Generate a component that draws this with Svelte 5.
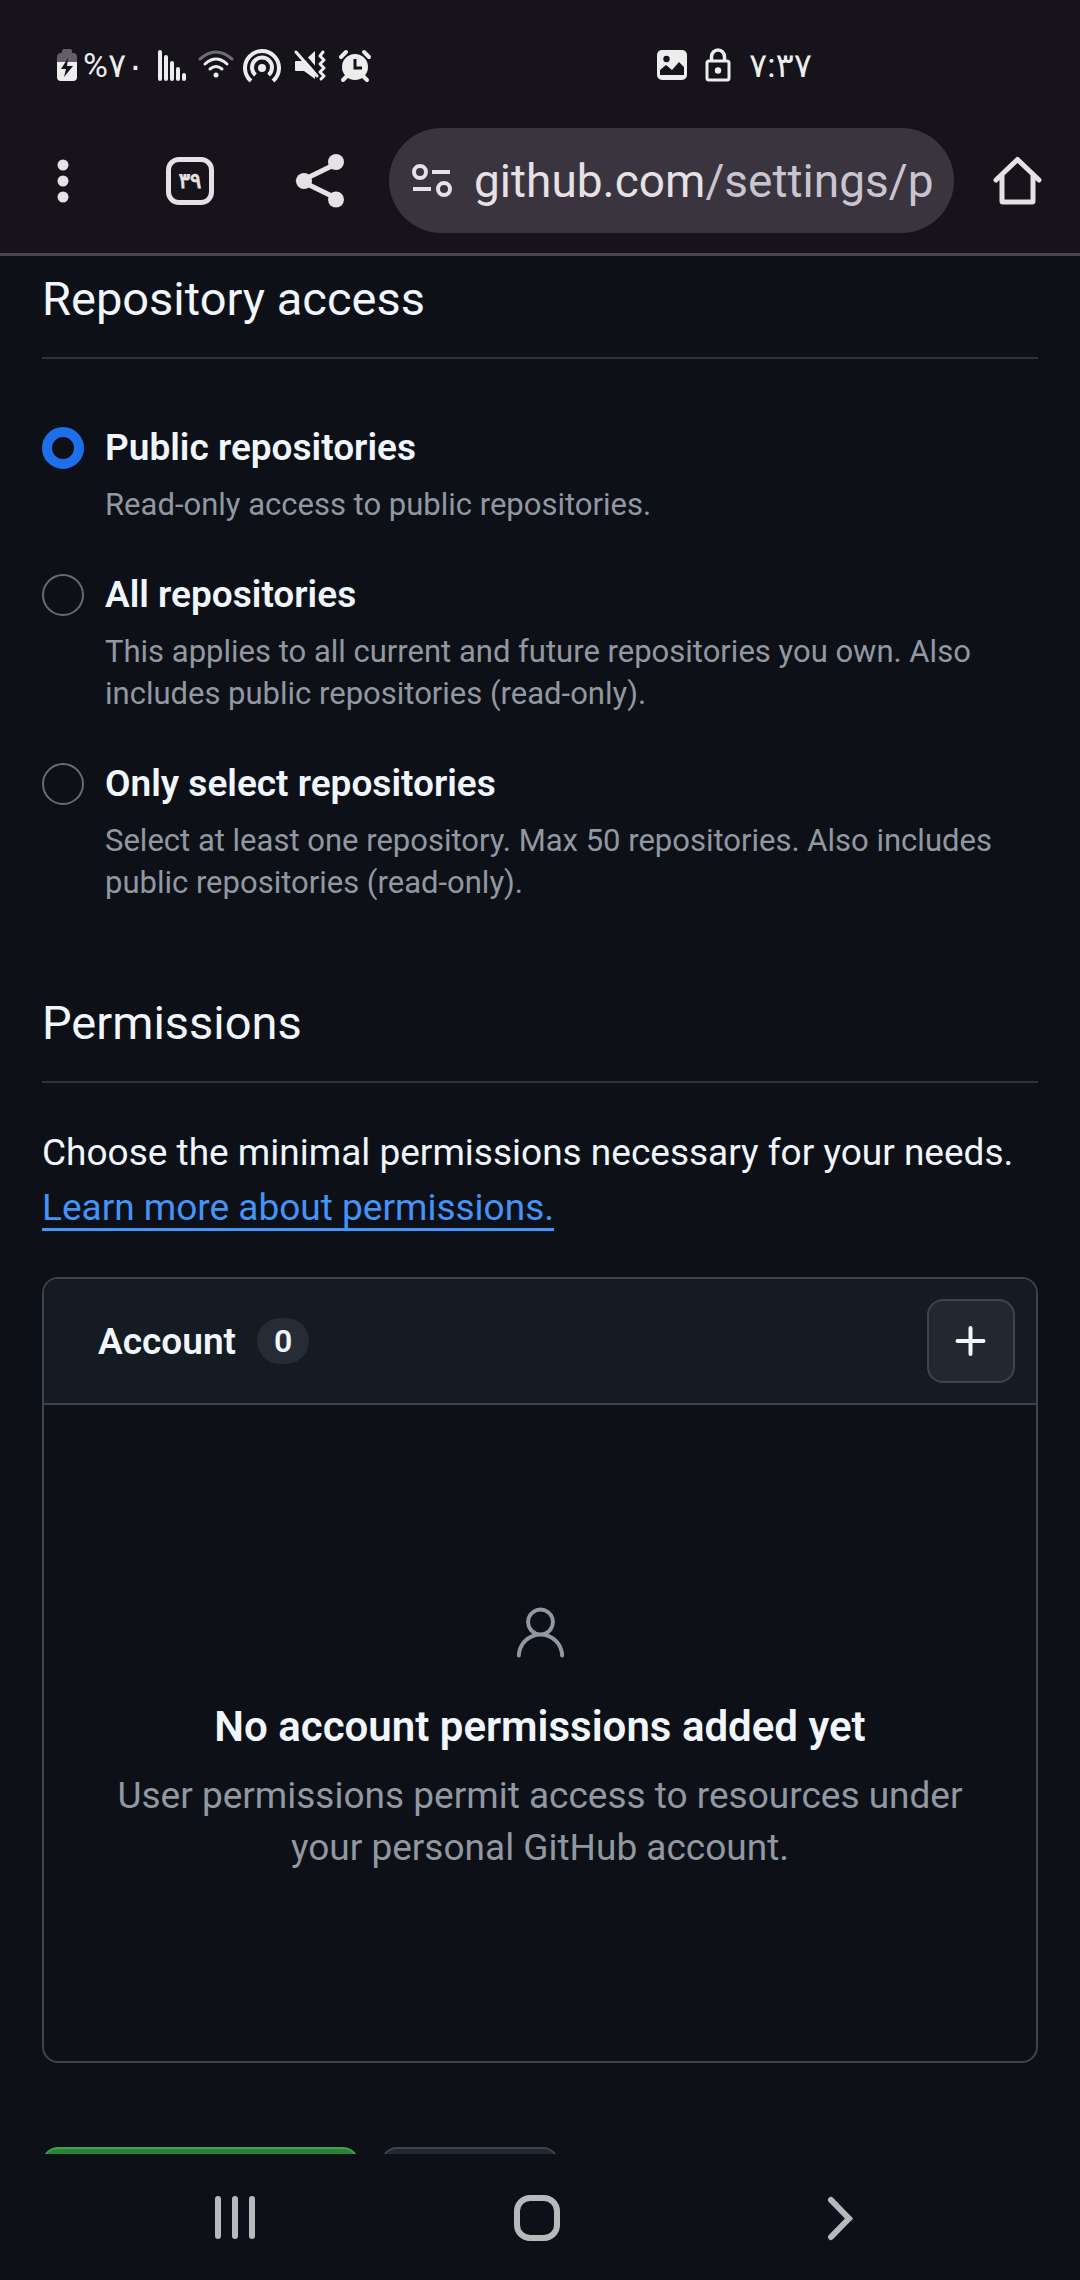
<script>
  let selected = $state('public');

  const options = [
    { id: 'public', label: 'Public repositories', hint: 'Read-only access to public repositories.' },
    {
      id: 'all',
      label: 'All repositories',
      hint: 'This applies to all current and future repositories you own. Also includes public repositories (read-only).'
    },
    {
      id: 'select',
      label: 'Only select repositories',
      hint: 'Select at least one repository. Max 50 repositories. Also includes public repositories (read-only).'
    }
  ];
</script>

<div class="screen">
  <header class="chrome">
    <div class="status">
      <div class="status-left">
        <svg class="battery" viewBox="0 0 22 34" aria-hidden="true">
          <path d="M6 5V3q0-2 2-2h6q2 0 2 2v2h1q4 0 4 4v6H1V9q0-4 4-4z" fill="#625f66" />
          <path d="M1 14h20v15q0 4-4 4H5q-4 0-4-4z" fill="#ededee" />
          <path d="M12 10 5 21h5l-2 8 9-11h-6z" fill="#16131a" />
        </svg>
        <span class="status-text percent">%۷۰</span>
        <svg class="cell" viewBox="0 0 46 36" aria-hidden="true">
          <g stroke="#ededee" stroke-width="4" stroke-linecap="round">
            <path d="M11 5v27M17 10v22M23 16v16M29 22v10M35 28v4" />
          </g>
        </svg>
        <svg class="cell" viewBox="0 0 46 36" aria-hidden="true">
          <g fill="none" stroke-width="3" stroke-linecap="round">
            <path d="M5 12q16-14 32 0" stroke="#6f6c73" />
            <path d="M10 17q11-10 22 0M15 22q6-5 12 0" stroke="#ededee" />
          </g>
          <circle cx="21" cy="28" r="2.5" fill="#ededee" />
        </svg>
        <svg class="cell" viewBox="0 0 46 36" aria-hidden="true">
          <g fill="none" stroke="#ededee" stroke-width="4">
            <path d="M10 34A17 17 0 1 1 32 34" />
            <path d="M14.5 28A10 10 0 1 1 27.500 28" />
          </g>
          <circle cx="21" cy="21" r="4" fill="#ededee" />
        </svg>
        <svg class="cell" viewBox="0 0 46 36" aria-hidden="true">
          <path d="M9 14h8l11-10v28L17 24H9q-1 0-1-1v-8q0-1 1-1z" fill="#ededee" />
          <path d="m11 2 20 23" stroke="#16131a" stroke-width="4" />
          <path d="m9 5 21 24" stroke="#ededee" stroke-width="3" stroke-linecap="round" />
          <path d="m36 5-3 4 4 4-4 4 4 4-4 4 4 4-3 3" fill="none" stroke="#ededee" stroke-width="3" stroke-linecap="round" stroke-linejoin="round" />
        </svg>
        <svg class="cell" viewBox="0 0 46 36" aria-hidden="true">
          <circle cx="22" cy="20" r="13" fill="#ededee" />
          <path d="m8 10 5-5M36 10l-5-5M14 29l-4 4M30 29l4 4" stroke="#ededee" stroke-width="4" stroke-linecap="round" />
          <path d="M22 12v9h7" fill="none" stroke="#16131a" stroke-width="3" />
        </svg>
      </div>
      <div class="status-right">
        <svg class="picture" viewBox="0 0 30 30" aria-hidden="true">
          <rect width="30" height="30" rx="5" fill="#ededee" />
          <circle cx="9.500" cy="9" r="3.200" fill="#16131a" />
          <path d="M3 25v-5l6-5 6 5 7-8 5 5v8z" fill="#16131a" />
        </svg>
        <svg class="lock" viewBox="0 0 26 34" aria-hidden="true">
          <rect x="2" y="13" width="22" height="19" rx="2" fill="none" stroke="#ededee" stroke-width="3" />
          <path d="M6.500 12V9a6.500 7 0 0 1 13 0v3" fill="none" stroke="#ededee" stroke-width="3.500" />
          <circle cx="13" cy="22.500" r="3.200" fill="#ededee" />
        </svg>
        <span class="status-text">۷:۳۷</span>
      </div>
    </div>

    <div class="toolbar">
      <button class="tool" aria-label="Menu">
        <svg viewBox="0 0 56 56">
          <g fill="#e6e1e5"><circle cx="27" cy="12" r="5.500" /><circle cx="27" cy="28" r="5.500" /><circle cx="27" cy="44" r="5.500" /></g>
        </svg>
      </button>
      <button class="tool tab-tool" aria-label="Tabs"><span class="tabs">۳۹</span></button>
      <button class="tool" aria-label="Share">
        <svg viewBox="0 0 56 56">
          <path d="M48 9 9 28l39 19" fill="none" stroke="#e6e1e5" stroke-width="5" />
          <g fill="#e6e1e5"><circle cx="12" cy="28" r="8" /><circle cx="44" cy="9" r="8" /><circle cx="44" cy="46.500" r="8" /></g>
        </svg>
      </button>
      <button class="address">
        <svg viewBox="0 0 40 34" aria-hidden="true">
          <g fill="none" stroke="#e6e1e5" stroke-width="4">
            <circle cx="8" cy="8" r="6" /><path d="M20 8h18M1 25h18" /><circle cx="32" cy="25" r="6" />
          </g>
        </svg>
        <span class="url"><span class="host">github.com</span>/settings/p</span>
      </button>
      <button class="home" aria-label="Home">
        <svg viewBox="0 0 56 56">
          <path d="M7 27 28.500 6.500 50 27M13 23v25q0 1 1 1h29q1 0 1-1V23" fill="none" stroke="#e6e1e5" stroke-width="5" stroke-linecap="round" stroke-linejoin="round" />
        </svg>
      </button>
    </div>
  </header>

  <main>
    <h2 id="access">Repository access</h2>
    <div class="options" role="radiogroup" aria-labelledby="access">
      {#each options as option (option.id)}
        <div class="option">
          <input type="radio" id={option.id} name="access" value={option.id} bind:group={selected} aria-describedby="{option.id}-hint" />
          <div>
            <label for={option.id}>{option.label}</label>
            <p class="hint" id="{option.id}-hint">{option.hint}</p>
          </div>
        </div>
      {/each}
    </div>

    <h2>Permissions</h2>
    <p class="intro">Choose the minimal permissions necessary for your needs. <a href="#permissions">Learn more about permissions.</a></p>

    <section class="box">
      <div class="box-head">
        <h3>Account</h3>
        <span class="count">0</span>
        <button class="add" aria-label="Add permissions">
          <svg viewBox="0 0 32 32"><path d="M15.500 3v26M2.500 16h26" stroke="#f0f6fc" stroke-width="4" stroke-linecap="round" /></svg>
        </button>
      </div>
      <div class="blank">
        <svg viewBox="0 0 24 24" aria-hidden="true">
          <path fill="#9198a1" d="M12 2.500a5.500 5.500 0 0 1 3.096 10.047 9.005 9.005 0 0 1 5.900 8.181.75.75 0 1 1-1.499.044 7.500 7.500 0 0 0-14.993 0 .75.75 0 0 1-1.500-.045 9.005 9.005 0 0 1 5.900-8.180A5.500 5.500 0 0 1 12 2.500ZM8 8a4 4 0 1 0 8 0 4 4 0 0 0-8 0Z" />
        </svg>
        <h4>No account permissions added yet</h4>
        <p>User permissions permit access to resources under your personal GitHub account.</p>
      </div>
    </section>

    <div class="actions">
      <button class="primary" aria-label="Generate token"></button>
      <button class="secondary" aria-label="Cancel"></button>
    </div>
  </main>

  <nav>
    <button aria-label="Recent apps">
      <svg viewBox="0 0 48 48"><path d="M7 6v37M24 6v37M41 6v37" stroke="#b9b9bb" stroke-width="6" stroke-linecap="round" /></svg>
    </button>
    <button aria-label="Home screen">
      <svg viewBox="0 0 48 48"><rect x="3" y="5" width="40" height="40" rx="13" fill="none" stroke="#b9b9bb" stroke-width="6" /></svg>
    </button>
    <button aria-label="Back">
      <svg viewBox="0 0 48 48"><path d="M14 7l18 18.500L14 44" fill="none" stroke="#b9b9bb" stroke-width="6" stroke-linecap="round" /></svg>
    </button>
  </nav>
</div>

<style>
  :global(body) {
    background: #0d1117;
    color: #f0f6fc;
    font-family: Roboto, 'DejaVu Sans', sans-serif;
  }
  .screen {
    display: flex;
    flex-direction: column;
    min-height: 100vh;
  }
  h2, h3, h4, p {
    margin: 0;
  }
  button {
    display: flex;
    align-items: center;
    justify-content: center;
    box-sizing: border-box;
    margin: 0;
    padding: 0;
    border: 0;
    background: none;
    color: inherit;
    font: inherit;
  }
  svg {
    display: block;
    flex: none;
  }

  .chrome {
    background: #16131a;
    border-bottom: 3px solid #49454f;
  }
  .status {
    display: flex;
    justify-content: space-between;
    height: 128px;
    padding: 0 268px 0 56px;
  }
  .status-left, .status-right {
    display: flex;
    align-items: center;
    height: 130px;
  }
  .status-text {
    color: #ededee;
    font-size: 34px;
    line-height: 40px;
  }
  .percent {
    width: 66px;
    padding-left: 5px;
    white-space: nowrap;
  }
  .battery { width: 22px; height: 34px; }
  .cell { width: 46px; height: 36px; }
  .status-right { gap: 18px; }
  .picture { width: 30px; height: 30px; }
  .lock { width: 26px; height: 34px; }

  .toolbar {
    display: flex;
    align-items: center;
    padding-bottom: 20px;
  }
  .tool {
    flex: none;
    width: 128px;
    height: 105px;
  }
  .tool svg, .home svg { width: 56px; height: 56px; }
  .tab-tool { padding-right: 4px; }
  .tabs {
    display: flex;
    align-items: center;
    justify-content: center;
    box-sizing: border-box;
    width: 48px;
    height: 48px;
    border: 5px solid #e6e1e5;
    border-radius: 13px;
    color: #e6e1e5;
    font-size: 21px;
    font-weight: 400;
    line-height: 24px;
    -webkit-text-stroke: 1px #e6e1e5;
  }
  .address {
    flex: 1;
    justify-content: flex-start;
    gap: 22px;
    min-width: 0;
    height: 105px;
    margin-left: 5px;
    padding: 0 23px;
    border-radius: 53px;
    background: #3a343e;
    overflow: hidden;
  }
  .address svg { width: 40px; height: 34px; }
  .url {
    color: #cac4d0;
    font-size: 46px;
    line-height: 56px;
    white-space: nowrap;
  }
  .host { color: #e6e1e5; }
  .home {
    flex: none;
    width: 126px;
    height: 105px;
  }

  main {
    flex: 1;
    padding: 8px 42px 0;
  }
  h2 {
    padding-bottom: 23px;
    border-bottom: 2px solid #2f353d;
    font-size: 47px;
    font-weight: 400;
    line-height: 70px;
  }
  .options {
    display: flex;
    flex-direction: column;
    gap: 48px;
    padding: 68px 0 84px;
  }
  .option {
    display: flex;
    gap: 21px;
  }
  input {
    appearance: none;
    flex: none;
    box-sizing: border-box;
    width: 42px;
    height: 42px;
    margin: 0;
    border: 2px solid #656c76;
    border-radius: 50%;
  }
  input:checked {
    border: 10px solid #1f6feb;
  }
  label {
    display: block;
    font-size: 37px;
    font-weight: 600;
    line-height: 42px;
  }
  .hint {
    margin-top: 15px;
    color: #9198a1;
    font-size: 31px;
    line-height: 42px;
  }
  .intro {
    margin: 42px 0;
    font-size: 37px;
    line-height: 55px;
  }
  a {
    color: #4493f8;
    text-decoration: underline;
    text-decoration-thickness: 3px;
    text-underline-offset: 8px;
    text-decoration-skip-ink: none;
  }

  .box {
    border: 2px solid #3d444d;
    border-radius: 16px;
    overflow: hidden;
  }
  .box-head {
    display: flex;
    align-items: center;
    padding: 20px 21px 20px 54px;
    border-bottom: 2px solid #3d444d;
    background: #151b23;
  }
  h3 {
    font-size: 37px;
    font-weight: 600;
    line-height: 55px;
  }
  .count {
    margin-left: 21px;
    padding: 0 17px;
    border-radius: 23px;
    background: #262c36;
    font-size: 32px;
    font-weight: 600;
    line-height: 46px;
  }
  .add {
    width: 88px;
    height: 84px;
    margin-left: auto;
    border: 2px solid #3d444d;
    border-radius: 16px;
    background: #212830;
  }
  .add svg { width: 32px; height: 32px; }
  .blank {
    display: flex;
    flex-direction: column;
    align-items: center;
    padding: 196px 63px 187px;
    text-align: center;
  }
  .blank svg { width: 63px; height: 63px; }
  h4 {
    margin: 31px 0 12px;
    font-size: 42px;
    font-weight: 600;
    line-height: 63px;
  }
  .blank p {
    color: #9198a1;
    font-size: 37px;
    line-height: 52px;
  }

  .actions {
    display: flex;
    gap: 22px;
    height: 7px;
    margin-top: 84px;
    overflow: hidden;
  }
  .primary, .secondary {
    height: 84px;
    border: 2px solid #3d444d;
    border-radius: 16px;
    background: #212830;
  }
  .primary {
    width: 317px;
    border-color: #4a9a58;
    background: #238636;
  }
  .secondary { width: 178px; }

  nav {
    display: flex;
    padding: 0 88px 0 83px;
  }
  nav button {
    flex: 1;
    height: 126px;
  }
  nav svg { width: 48px; height: 48px; }
</style>
